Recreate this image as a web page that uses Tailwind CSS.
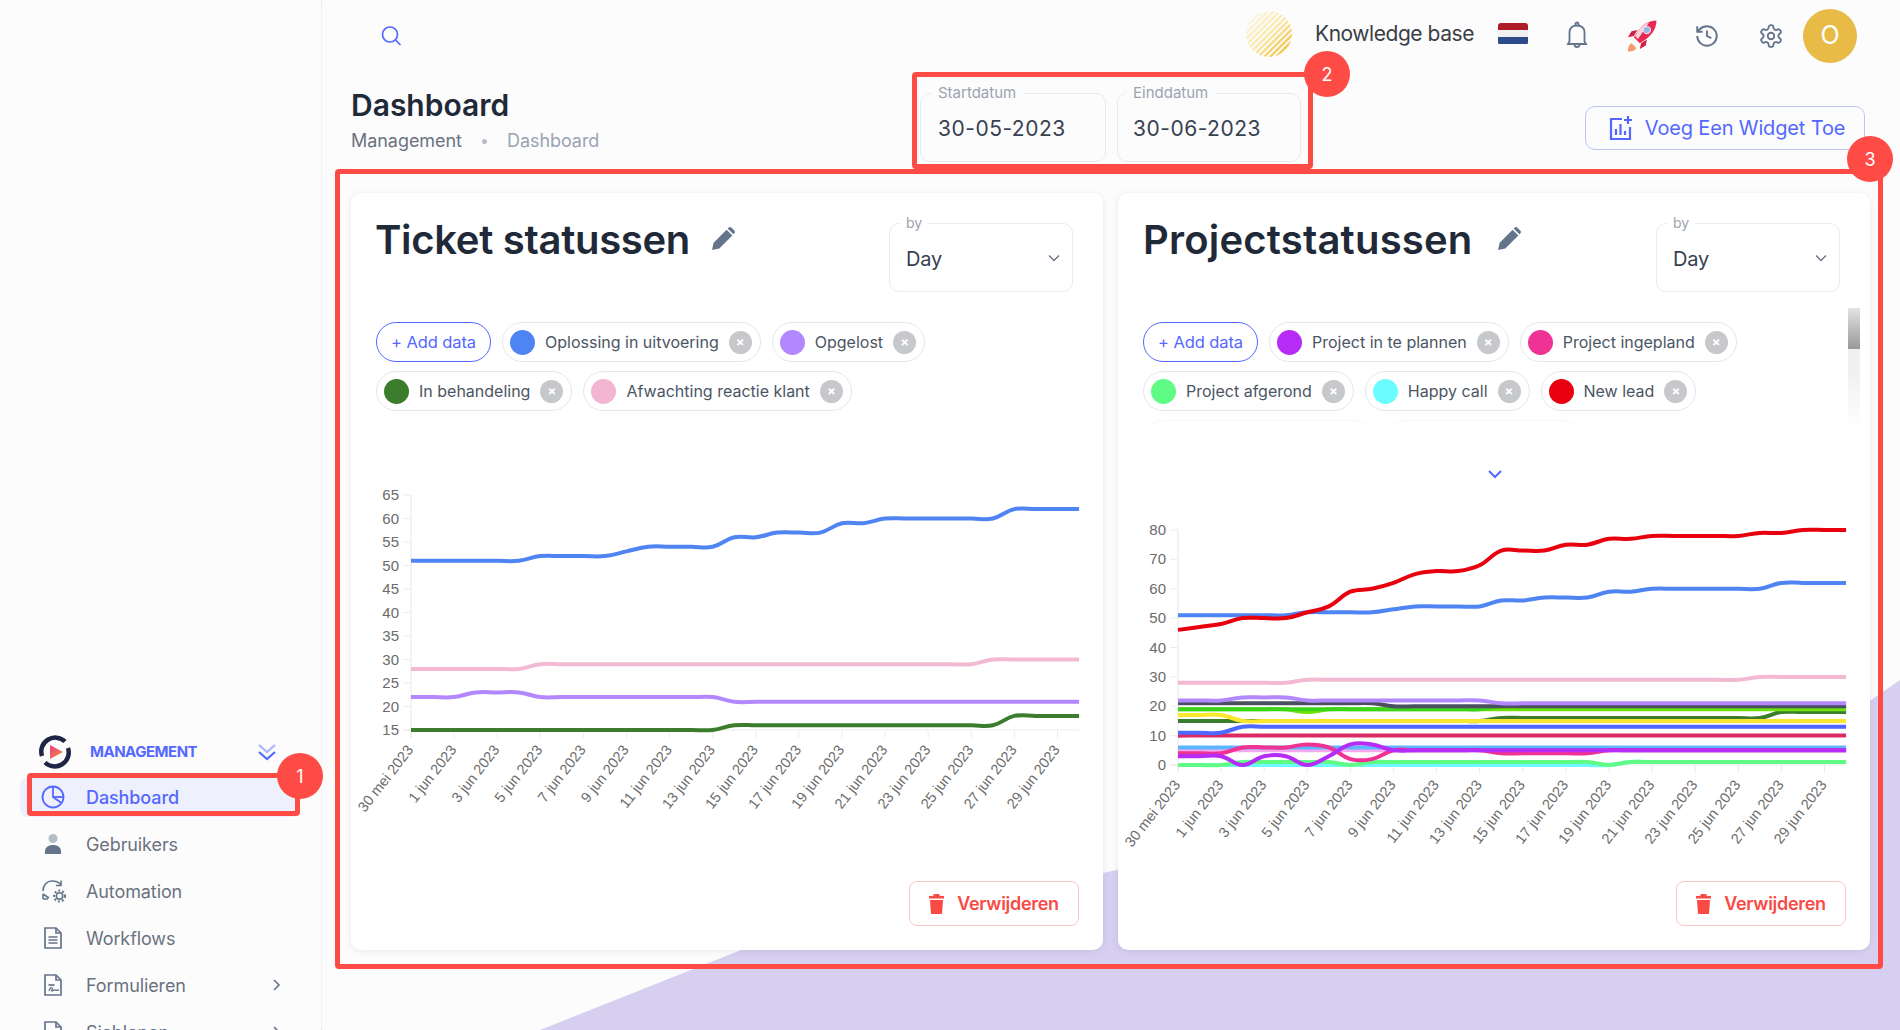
<!DOCTYPE html>
<html lang="nl">
<head>
<meta charset="utf-8">
<title>Dashboard</title>
<script src="https://cdn.jsdelivr.net/npm/@tailwindcss/browser@4"></script>
</head>
<body class="bg-[#fcfcfd] font-['Inter',sans-serif]">
<div class="relative w-[1900px] h-[1030px] overflow-hidden flex">
  <svg class="absolute inset-0" width="1900" height="1030"><polygon points="540,1030 741,950 1103,873 1871,700 1900,680 1900,1030" fill="#d6cff0"/></svg>

  <!-- Sidebar -->
  <aside class="relative w-[322px] h-[1100px] shrink-0 border-r border-dotted border-[#e5e7eb] pt-[734px]">
    <div class="flex items-center h-[36px] pl-[38px] pr-[44px] mb-[7px]">
      <svg width="34" height="34" viewBox="0 0 34 34" fill="none">
        <defs><linearGradient id="pl" x1="0" y1="0" x2="1" y2="1"><stop offset="0" stop-color="#e83e8c"/><stop offset="1" stop-color="#f59331"/></linearGradient></defs>
        <path d="M4 21A14 14 0 0 1 27 6.5" stroke="#1f2544" stroke-width="4.5"/>
        <path d="M30 13A14 14 0 0 1 7 27.5" stroke="#1f2544" stroke-width="4.5"/>
        <path d="M12 10l13 7-13 7z" fill="url(#pl)"/>
      </svg>
      <span class="ml-[18px] text-[15px] font-bold tracking-[-0.5px] text-[#5468ff]">MANAGEMENT</span>
      <svg class="ml-auto" width="20" height="20" viewBox="0 0 20 20" fill="none"><path d="M2 3l8 7 8-7" stroke="#aab5fb" stroke-width="2.2"/><path d="M2 10l8 7 8-7" stroke="#5468ff" stroke-width="2.2"/></svg>
    </div>
    <nav class="flex flex-col gap-[7px] ml-[20px] w-[280px] text-[18px] tracking-[-0.1px] text-[#6b7280]">
      <a class="flex items-center h-[40px] rounded-[8px] bg-[#eef0fd] text-[#5468ff] font-medium pl-[21px]">
        <svg class="w-[24px] shrink-0" width="24" height="24" viewBox="0 0 24 24" fill="none" stroke="#5468ff" stroke-width="1.8"><circle cx="12" cy="12" r="10.5"/><path d="M12 1.5V12l8.5 6"/><path d="M12 12h10.5"/></svg>
        <span class="ml-[21px]">Dashboard</span>
      </a>
      <a class="flex items-center h-[40px] pl-[21px]">
        <svg width="24" height="24" viewBox="0 0 24 24"><circle cx="12" cy="6.5" r="4.5" fill="#b4bcc7"/><path d="M4 22v-2.5C4 15 8 13 12 13s8 2 8 6.500V22z" fill="#64748b"/></svg>
        <span class="ml-[21px]">Gebruikers</span>
      </a>
      <a class="flex items-center h-[40px] pl-[21px]">
        <svg width="26" height="26" viewBox="0 0 26 26" fill="none" stroke="#64748b" stroke-width="1.6"><path d="M2 13C2 7 6 3 11 3c4 0 7 1 9 4"/><path d="M20 2.500V7.500h-5"/><path d="M2 16l6 4M2 16v5M2 21h5"/><circle cx="18.500" cy="18" r="3.200"/><circle cx="18.500" cy="18" r="5.500" stroke-dasharray="2 2" stroke-width="2"/></svg>
        <span class="ml-[19px]">Automation</span>
      </a>
      <a class="flex items-center h-[40px] pl-[21px]">
        <svg width="24" height="24" viewBox="0 0 24 24" fill="none" stroke="#64748b" stroke-width="1.7"><path d="M4 2h11l5 5v15H4z"/><path d="M15 2v5h5"/><path d="M7.500 11h9M7.500 14h9M7.500 17h9"/></svg>
        <span class="ml-[21px]">Workflows</span>
      </a>
      <a class="flex items-center h-[40px] pl-[21px] pr-[18px]">
        <svg width="24" height="24" viewBox="0 0 24 24" fill="none" stroke="#64748b" stroke-width="1.7"><path d="M4 2h11l5 5v15H4z"/><path d="M15 2v5h5"/><path d="M7.500 12h6"/><path d="M8 18c1-3 2-4 3-3s-1 3 0 3 1-1 2-1 1 1 5 0" stroke-width="1.300"/></svg>
        <span class="ml-[21px]">Formulieren</span>
        <svg class="ml-auto" width="10" height="14" viewBox="0 0 10 14" fill="none" stroke="#64748b" stroke-width="1.600"><path d="M2 2l5 5-5 5"/></svg>
      </a>
      <a class="flex items-center h-[40px] pl-[21px] pr-[18px]">
        <svg width="24" height="24" viewBox="0 0 24 24" fill="none" stroke="#64748b" stroke-width="1.7"><path d="M4 2h11l5 5v15H4z"/><path d="M15 2v5h5"/></svg>
        <span class="ml-[21px]">Sjablonen</span>
        <svg class="ml-auto" width="10" height="14" viewBox="0 0 10 14" fill="none" stroke="#64748b" stroke-width="1.600"><path d="M2 2l5 5-5 5"/></svg>
      </a>
    </nav>
  </aside>

  <!-- Main -->
  <main class="relative flex-1 flex flex-col pl-[29px] pr-[30px]">
    <header class="h-[73px] flex items-center pr-[13px] pb-[2px]">
      <svg class="ml-[28px]" width="24" height="24" viewBox="0 0 24 24" fill="none" stroke="#5468ff" stroke-width="1.700"><circle cx="11" cy="10.500" r="7.500"/><path d="M16.500 16l5 5"/></svg>
      <svg class="ml-auto -mt-[4px]" width="48" height="48" viewBox="0 0 48 48">
        <defs>
          <clipPath id="sun"><circle cx="24" cy="24" r="23"/></clipPath>
          <linearGradient id="sg" gradientUnits="userSpaceOnUse" x1="6" y1="6" x2="42" y2="42"><stop offset="0" stop-color="#fdf7df"/><stop offset="0.5" stop-color="#fae9ad"/><stop offset="1" stop-color="#f2c040"/></linearGradient>
        </defs>
        <g clip-path="url(#sun)" fill="none">
          <path d="M0 48L48 0M0 42L42 0M0 36L36 0M0 30L30 0M0 24L24 0M0 18L18 0M0 12L12 0M6 48L48 6M12 48L48 12M18 48L48 18M24 48L48 24M30 48L48 30M36 48L48 36M42 48L48 42" stroke="url(#sg)" stroke-width="2.300"/>
        </g>
      </svg>
      <span class="ml-[22px] -mt-[4px] text-[21px] tracking-[-0.45px] text-[#3a3f47]">Knowledge base</span>
      <div class="ml-[24px] -mt-[4px] w-[30px] h-[22px] rounded-[3px] overflow-hidden flex flex-col">
        <div class="flex-1 bg-[#ae1c28]"></div><div class="flex-1 bg-[#f0f0f0]"></div><div class="flex-1 bg-[#2c4a8c]"></div>
      </div>
      <svg class="ml-[37px]" width="24" height="30" viewBox="0 0 24 30" fill="none" stroke="#64748b" stroke-width="1.800"><path d="M3 23h18l-1.500-2.500V11C19.500 7 16.500 4.500 12 4.500S4.500 7 4.500 11v9.500z"/><path d="M10.500 4.500V3a1.500 1.500 0 0 1 3 0v1.500"/><path d="M9.500 23.500a2.500 2.500 0 0 0 5 0"/></svg>
      <svg class="ml-[33px]" width="38" height="38" viewBox="0 0 32 32">
        <path d="M8 22c-2 1-3 3-3 7 4 0 6-1 7-3z" fill="#f59a6b"/>
        <path d="M10 16l-5 1 3-5 5-1zM16 22l-1 5 5-3 1-5z" fill="#d61f45"/>
        <path d="M29 3c-6 0-11 3-15 8l-4 6 5 5 6-4c5-4 8-9 8-15z" fill="#e72850"/>
        <path d="M23 4.500c-4 1.500-7 4-9.500 7.500L11 16l2.500 2.500z" fill="#f7d5dd"/>
        <circle cx="21" cy="11" r="3" fill="#8fb7e8" stroke="#f7d5dd"/>
      </svg>
      <svg class="ml-[34px]" width="26" height="26" viewBox="0 0 24 24" fill="none" stroke="#64748b" stroke-width="1.800"><path d="M3 12a9 9 0 1 0 9-9 9.750 9.750 0 0 0-6.740 2.740L3 8"/><path d="M3 3v5h5"/><path d="M12 7v5l4 2"/></svg>
      <svg class="ml-[38px]" width="26" height="26" viewBox="0 0 24 24" fill="none" stroke="#64748b" stroke-width="1.700"><path d="M12.220 2h-.44a2 2 0 0 0-2 2v.18a2 2 0 0 1-1 1.730l-.43.25a2 2 0 0 1-2 0l-.15-.08a2 2 0 0 0-2.730.73l-.22.38a2 2 0 0 0 .73 2.730l.15.1a2 2 0 0 1 1 1.720v.51a2 2 0 0 1-1 1.740l-.15.09a2 2 0 0 0-.73 2.730l.22.38a2 2 0 0 0 2.730.73l.15-.08a2 2 0 0 1 2 0l.43.25a2 2 0 0 1 1 1.730V20a2 2 0 0 0 2 2h.44a2 2 0 0 0 2-2v-.18a2 2 0 0 1 1-1.730l.43-.25a2 2 0 0 1 2 0l.15.08a2 2 0 0 0 2.730-.73l.22-.39a2 2 0 0 0-.73-2.730l-.15-.08a2 2 0 0 1-1-1.740v-.5a2 2 0 0 1 1-1.740l.15-.09a2 2 0 0 0 .73-2.730l-.22-.38a2 2 0 0 0-2.730-.73l-.15.08a2 2 0 0 1-2 0l-.43-.25a2 2 0 0 1-1-1.730V4a2 2 0 0 0-2-2z"/><circle cx="12" cy="12" r="3"/></svg>
      <div class="ml-[19px] w-[54px] h-[54px] rounded-full bg-[#e8bb47] flex items-center justify-center text-white text-[25px]">O</div>
    </header>

    <section class="h-[120px] flex items-start">
      <div class="w-[569px] pt-[16px]">
        <h1 class="text-[30px] leading-[32px] font-semibold text-[#1f2937]">Dashboard</h1>
        <div class="flex items-center mt-[8px] text-[18px] leading-[24px] tracking-[-0.05px]">
          <span class="text-[#6b7280]">Management</span>
          <span class="w-[5px] h-[5px] rounded-full bg-[#b6bdc8] mx-[20px]"></span>
          <span class="text-[#9aa3b2]">Dashboard</span>
        </div>
      </div>
      <div class="flex gap-[11px] mt-[20px]">
        <div class="relative w-[186px] h-[69px] rounded-[10px] border border-[#e8eaee] pl-[17px] flex items-center">
          <span class="absolute -top-[10px] left-[10px] px-[7px] bg-[#fcfcfd] text-[15px] leading-[18px] text-[#9ca3af]">Startdatum</span>
          <span class="text-[21px] tracking-[0.5px] text-[#374151] pt-[2px]">30-05-2023</span>
        </div>
        <div class="relative w-[184px] h-[69px] rounded-[10px] border border-[#e8eaee] pl-[15px] flex items-center">
          <span class="absolute -top-[10px] left-[8px] px-[7px] bg-[#fcfcfd] text-[15px] leading-[18px] text-[#9ca3af]">Einddatum</span>
          <span class="text-[21px] tracking-[0.5px] text-[#374151] pt-[2px]">30-06-2023</span>
        </div>
      </div>
      <button class="ml-auto mr-[5px] mt-[33px] w-[280px] h-[44px] pl-[3px] rounded-[10px] border border-[#bcc6fb] flex items-center justify-center gap-[12px] text-[20px] tracking-[-0.15px] text-[#5468ff] whitespace-nowrap">
        <svg width="25" height="28" viewBox="0 0 25 26" fill="none" stroke="#5468ff" stroke-width="2.200"><path d="M14 4H3v20h19V12"/><path d="M8 20v-6M12.500 20V9M17 20v-4"/><path d="M20 1v8M16 5h8"/></svg>
        Voeg Een Widget Toe
      </button>
    </section>

    <section class="grid grid-cols-2 gap-[15px] w-[1519px] h-[757px]">
      <!-- Card 1 -->
      <article class="relative bg-white rounded-[10px] shadow-[0_1px_6px_rgba(60,60,90,0.1)] pt-[30px]">
        <div class="flex items-start pl-[24px] pr-[30px] h-[68px]">
          <h2 class="text-[40px] leading-[48px] -mt-[7px] font-semibold tracking-[-0.3px] text-[#1f2937] whitespace-nowrap">Ticket statussen</h2>
          <svg class="ml-[21px] mt-[3px]" width="25" height="25" viewBox="0 0 24 24" fill="#64748b"><path d="M1 23l1.500-7L15 3.500l5.500 5.500L8 21.500zM17 1.500a1.800 1.800 0 0 1 2.500 0l3 3a1.800 1.800 0 0 1 0 2.500L21.500 8 16 2.500z"/></svg>
          <div class="relative ml-auto w-[184px] h-[69px] rounded-[10px] border border-[#e8eaee] pl-[16px] pr-[12px] flex items-center justify-between">
            <span class="absolute -top-[10px] left-[10px] px-[6px] bg-white text-[14px] leading-[18px] text-[#9ca3af]">by</span>
            <span class="text-[20px] text-[#374151] tracking-[-0.2px] pt-[2px]">Day</span>
            <svg width="12" height="8" viewBox="0 0 12 8" fill="none" stroke="#6b7280" stroke-width="1.400"><path d="M1 1.500l5 5 5-5"/></svg>
          </div>
        </div>
        <div class="mt-[31px] pl-[25px] pr-[30px] h-[108px] overflow-hidden flex flex-wrap content-start gap-x-[11px] gap-y-[9px] text-[16px] text-[#4b5563]">
          <button class="h-[40px] w-[115px] rounded-full border border-[#5468ff] text-[16.500px] tracking-[-0.1px] text-[#5468ff]">+ Add data</button>
          <div class="h-[40px] rounded-full border border-[#e5e7eb] flex items-center pl-[7px] pr-[8px]"><i class="w-[25px] h-[25px] rounded-full bg-[#4f84f3]"></i><span class="ml-[10px] mr-[10px]">Oplossing in uitvoering</span><b class="w-[23px] h-[23px] rounded-full bg-[#c7c8cc] text-white text-[13px] leading-[23px] text-center">×</b></div>
          <div class="h-[40px] rounded-full border border-[#e5e7eb] flex items-center pl-[7px] pr-[8px]"><i class="w-[25px] h-[25px] rounded-full bg-[#b388ff]"></i><span class="ml-[10px] mr-[10px]">Opgelost</span><b class="w-[23px] h-[23px] rounded-full bg-[#c7c8cc] text-white text-[13px] leading-[23px] text-center">×</b></div>
          <div class="h-[40px] rounded-full border border-[#e5e7eb] flex items-center pl-[7px] pr-[8px]"><i class="w-[25px] h-[25px] rounded-full bg-[#3b7d2c]"></i><span class="ml-[10px] mr-[10px]">In behandeling</span><b class="w-[23px] h-[23px] rounded-full bg-[#c7c8cc] text-white text-[13px] leading-[23px] text-center">×</b></div>
          <div class="h-[40px] rounded-full border border-[#e5e7eb] flex items-center pl-[7px] pr-[8px]"><i class="w-[25px] h-[25px] rounded-full bg-[#f3b6d0]"></i><span class="ml-[10px] mr-[10px]">Afwachting reactie klant</span><b class="w-[23px] h-[23px] rounded-full bg-[#c7c8cc] text-white text-[13px] leading-[23px] text-center">×</b></div>
        </div>
        <svg id="chart1" class="block" width="752" height="451" viewBox="0 0 752 451"></svg>
        <button class="absolute left-[558px] top-[688px] w-[170px] h-[45px] rounded-[8px] border border-[#fdc4c4] flex items-center justify-center gap-[13px] text-[18px] font-semibold tracking-[-0.3px] text-[#f94a45]">
          <svg width="15" height="20" viewBox="0 0 15 20" fill="#f94a45"><path d="M5 0h5l1 2h4v2.500H0V2h4zM1 6h13l-1 14H2z"/></svg>Verwijderen
        </button>
      </article>

      <!-- Card 2 -->
      <article class="relative bg-white rounded-[10px] shadow-[0_1px_6px_rgba(60,60,90,0.1)] pt-[30px]">
        <div class="flex items-start pl-[25px] pr-[30px] h-[68px]">
          <h2 class="text-[40px] leading-[48px] -mt-[7px] font-semibold tracking-[0.2px] text-[#1f2937] whitespace-nowrap">Projectstatussen</h2>
          <svg class="ml-[24px] mt-[3px]" width="25" height="25" viewBox="0 0 24 24" fill="#64748b"><path d="M1 23l1.500-7L15 3.500l5.500 5.500L8 21.500zM17 1.500a1.800 1.800 0 0 1 2.500 0l3 3a1.800 1.800 0 0 1 0 2.500L21.500 8 16 2.500z"/></svg>
          <div class="relative ml-auto w-[184px] h-[69px] rounded-[10px] border border-[#e8eaee] pl-[16px] pr-[12px] flex items-center justify-between">
            <span class="absolute -top-[10px] left-[10px] px-[6px] bg-white text-[14px] leading-[18px] text-[#9ca3af]">by</span>
            <span class="text-[20px] text-[#374151] tracking-[-0.2px] pt-[2px]">Day</span>
            <svg width="12" height="8" viewBox="0 0 12 8" fill="none" stroke="#6b7280" stroke-width="1.400"><path d="M1 1.500l5 5 5-5"/></svg>
          </div>
        </div>
        <div class="mt-[31px] pl-[25px] pr-[40px] h-[108px] overflow-hidden flex flex-wrap content-start gap-x-[11px] gap-y-[9px] text-[16px] text-[#4b5563]">
          <button class="h-[40px] w-[115px] rounded-full border border-[#5468ff] text-[16.500px] tracking-[-0.1px] text-[#5468ff]">+ Add data</button>
          <div class="h-[40px] rounded-full border border-[#e5e7eb] flex items-center pl-[7px] pr-[8px]"><i class="w-[25px] h-[25px] rounded-full bg-[#b72bf7]"></i><span class="ml-[10px] mr-[10px]">Project in te plannen</span><b class="w-[23px] h-[23px] rounded-full bg-[#c7c8cc] text-white text-[13px] leading-[23px] text-center">×</b></div>
          <div class="h-[40px] rounded-full border border-[#e5e7eb] flex items-center pl-[7px] pr-[8px]"><i class="w-[25px] h-[25px] rounded-full bg-[#f03295]"></i><span class="ml-[10px] mr-[10px]">Project ingepland</span><b class="w-[23px] h-[23px] rounded-full bg-[#c7c8cc] text-white text-[13px] leading-[23px] text-center">×</b></div>
          <div class="h-[40px] rounded-full border border-[#e5e7eb] flex items-center pl-[7px] pr-[8px]"><i class="w-[25px] h-[25px] rounded-full bg-[#5ffb85]"></i><span class="ml-[10px] mr-[10px]">Project afgerond</span><b class="w-[23px] h-[23px] rounded-full bg-[#c7c8cc] text-white text-[13px] leading-[23px] text-center">×</b></div>
          <div class="h-[40px] rounded-full border border-[#e5e7eb] flex items-center pl-[7px] pr-[8px]"><i class="w-[25px] h-[25px] rounded-full bg-[#6bfcff]"></i><span class="ml-[10px] mr-[10px]">Happy call</span><b class="w-[23px] h-[23px] rounded-full bg-[#c7c8cc] text-white text-[13px] leading-[23px] text-center">×</b></div>
          <div class="h-[40px] rounded-full border border-[#e5e7eb] flex items-center pl-[7px] pr-[8px]"><i class="w-[25px] h-[25px] rounded-full bg-[#e8000e]"></i><span class="ml-[10px] mr-[10px]">New lead</span><b class="w-[23px] h-[23px] rounded-full bg-[#c7c8cc] text-white text-[13px] leading-[23px] text-center">×</b></div>
          <div class="h-[40px] w-[230px] rounded-full border border-[#f7f7f8]"></div>
          <div class="h-[40px] w-[200px] rounded-full border border-[#f7f7f8]"></div>
        </div>
        <div class="absolute right-[10px] top-[115px] w-[12px] h-[122px] bg-gradient-to-b from-[#f0f0f0] via-[#f0f0f0] to-white/0">
          <div class="h-[41px] bg-gradient-to-b from-[#e4e4e4] to-[#999999]"></div>
        </div>
        <svg id="chart2" class="block" width="752" height="451" viewBox="0 0 752 451" fill="none">
          <path d="M371 41l6 6 6-6" stroke="#5468ff" stroke-width="2" fill="none"/>
        </svg>
        <button class="absolute left-[558px] top-[688px] w-[170px] h-[45px] rounded-[8px] border border-[#fdc4c4] flex items-center justify-center gap-[13px] text-[18px] font-semibold tracking-[-0.3px] text-[#f94a45]">
          <svg width="15" height="20" viewBox="0 0 15 20" fill="#f94a45"><path d="M5 0h5l1 2h4v2.500H0V2h4zM1 6h13l-1 14H2z"/></svg>Verwijderen
        </button>
      </article>
    </section>
  </main>

  <!-- Annotations -->
  <div class="absolute left-[27px] top-[773px] w-[273px] h-[43px] border-[5px] border-[#ff4b45] rounded-[4px]"></div>
  <div class="absolute left-[912px] top-[72px] w-[401px] h-[97px] border-[5px] border-[#ff4b45] rounded-[4px]"></div>
  <div class="absolute left-[335px] top-[169px] w-[1548px] h-[800px] border-[5px] border-[#ff4b45] rounded-[4px]"></div>
  <div class="absolute left-[277px] top-[753px] w-[46px] h-[46px] rounded-full bg-[#ff4b45] text-white text-[18px] flex items-center justify-center">1</div>
  <div class="absolute left-[1304px] top-[51px] w-[46px] h-[46px] rounded-full bg-[#ff4b45] text-white text-[18px] flex items-center justify-center">2</div>
  <div class="absolute left-[1847px] top-[136px] w-[46px] h-[46px] rounded-full bg-[#ff4b45] text-white text-[18px] flex items-center justify-center">3</div>
</div>

<script>
(function () {
  var NS = 'http://www.w3.org/2000/svg';
  var labels = ['30 mei 2023','1 jun 2023','3 jun 2023','5 jun 2023','7 jun 2023','9 jun 2023','11 jun 2023','13 jun 2023','15 jun 2023','17 jun 2023','19 jun 2023','21 jun 2023','23 jun 2023','25 jun 2023','27 jun 2023','29 jun 2023'];
  function el(parent, name, attrs, text) {
    var e = document.createElementNS(NS, name);
    for (var k in attrs) e.setAttribute(k, attrs[k]);
    if (text !== undefined) e.textContent = text;
    parent.appendChild(e);
    return e;
  }
  // expands "51*6,52*4" into a list of 32 daily values
  function vals(s) {
    var out = [];
    s.split(',').forEach(function (p) {
      var a = p.split('*'), n = a[1] ? +a[1] : 1;
      for (var i = 0; i < n; i++) out.push(+a[0]);
    });
    return out;
  }
  function spline(pts) {
    var t = 0.4, d = 'M' + pts[0][0] + ' ' + pts[0][1], cps = [];
    for (var i = 0; i < pts.length; i++) {
      var p = pts[i - 1] || pts[i], c = pts[i], n = pts[i + 1] || pts[i];
      var d1 = Math.hypot(c[0] - p[0], c[1] - p[1]), d2 = Math.hypot(n[0] - c[0], n[1] - c[1]);
      var s = d1 + d2 || 1, fa = t * d1 / s, fb = t * d2 / s;
      cps.push({ px: c[0] - fa * (n[0] - p[0]), py: c[1] - fa * (n[1] - p[1]), nx: c[0] + fb * (n[0] - p[0]), ny: c[1] + fb * (n[1] - p[1]) });
    }
    for (i = 1; i < pts.length; i++) {
      d += 'C' + cps[i - 1].nx.toFixed(1) + ' ' + cps[i - 1].ny.toFixed(1) + ' ' + cps[i].px.toFixed(1) + ' ' + cps[i].py.toFixed(1) + ' ' + pts[i][0].toFixed(1) + ' ' + pts[i][1].toFixed(1);
    }
    return d;
  }
  function chart(id, cfg) {
    var svg = document.getElementById(id), x0 = 60, dx = 21.55, xEnd = x0 + 31 * dx;
    function Y(v) { return cfg.bottom - (v - cfg.min) * cfg.unit; }
    var top = Y(cfg.max);
    el(svg, 'path', { d: 'M' + x0 + ' ' + top + 'V' + (cfg.bottom + 8) + 'M' + (x0 - 8) + ' ' + cfg.bottom + 'H' + xEnd, stroke: '#ececee', 'stroke-width': 1.2, fill: 'none' });
    for (var v = cfg.min; v <= cfg.max; v += cfg.step) {
      el(svg, 'path', { d: 'M' + (x0 - 8) + ' ' + Y(v) + 'H' + x0, stroke: '#ececee', fill: 'none' });
      el(svg, 'text', { x: x0 - 12, y: Y(v) + 5, 'text-anchor': 'end', 'font-family': 'Liberation Sans, sans-serif', 'font-size': 15, fill: '#6b6b6b' }, v);
    }
    labels.forEach(function (l, i) {
      var x = x0 + (i * 2) * dx;
      el(svg, 'path', { d: 'M' + x + ' ' + cfg.bottom + 'v8', stroke: '#ececee', fill: 'none' });
      var lx = x + 3, ly = cfg.bottom + 20;
      el(svg, 'text', { x: lx, y: ly, 'text-anchor': 'end', transform: 'rotate(-52 ' + lx + ' ' + ly + ')', 'font-family': 'Liberation Sans, sans-serif', 'font-size': 14.5, fill: '#6b6b6b' }, l);
    });
    cfg.series.forEach(function (s) {
      var pts = vals(s[1]).map(function (v, i) { return [x0 + i * dx, Y(v)]; });
      el(svg, 'path', { d: spline(pts), stroke: s[0], 'stroke-width': 4, fill: 'none', 'stroke-linejoin': 'round' });
    });
  }
  var blue = ['#4f84f3', '51*6,52*4,53,54*4,56*2,57*3,59*2,60*6,62*4'];
  var pink = ['#f3b9d2', '28*6,29*21,30*5'];
  var purple = ['#b388ff', '22*3,23*3,22*9,21*17'];
  var green = ['#3b7d2c', '15*15,16*13,18*4'];
  chart('chart1', { bottom: 300, min: 15, max: 65, step: 5, unit: 4.7, series: [pink, purple, green, blue] });
  chart('chart2', { bottom: 335, min: 0, max: 80, step: 10, unit: 2.9375, series: [
    ['#6bfcff', '0*21,1*11'],
    ['#5ffb85', '0*3,1*5,0,1*11,0,1*11'],
    ['#f5a8ee', '5*32'],
    ['#5db5ff', '6*32'],
    ['#f03295', '4*3,6*3,7,6,2*2,5*5,4*5,5*12'],
    ['#b72bf7', '3*3,0,3*2,0,3,7*2,5*22'],
    ['#dc2a62', '10*32'],
    ['#4f68ff', '11*3,13*29'],
    green,
    ['#fbe72e', '17*3,15*29'],
    ['#6fe30a', '19*6,18,19*25'],
    ['#3cd41a', '19*15,20*17'],
    ['#4b5060', '21*10,20*22'],
    purple,
    pink,
    blue,
    ['#e8000e', '46,47,48,50*3,52,54,59,60,62,65,66*2,68,73*3,75*2,77*2,78*5,79*2,80*3']
  ] });
})();
</script>
</body>
</html>
